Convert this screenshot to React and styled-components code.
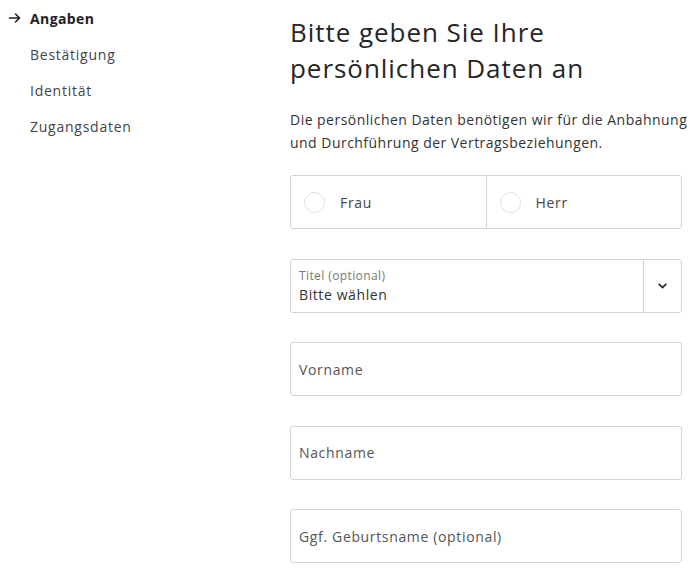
import React from "react";
import styled, { createGlobalStyle } from "styled-components";

const Global = createGlobalStyle`
  html, body { margin: 0; padding: 0; background: #fff; }
  body { font-family: "Open Sans", Lato, sans-serif; color: #2b2b2b; }
  * { box-sizing: border-box; }
`;

const Page = styled.div`
  display: grid;
  grid-template-columns: 290px 410px;
  width: 700px;
  height: 568px;
  overflow: hidden;
`;

const Side = styled.nav`
  display: flex;
  flex-direction: column;
`;

const NavItem = styled.div`
  display: flex;
  align-items: center;
  height: 36px;
  font-size: 14px;
  letter-spacing: ${(p) => (p.$active ? "0.4px" : "0.75px")};
  color: ${(p) => (p.$active ? "#222" : "#444")};
  font-weight: ${(p) => (p.$active ? 700 : 400)};
  padding-left: ${(p) => (p.$active ? "8px" : "30px")};
  gap: 9px;
`;

const Main = styled.main`
  display: flex;
  flex-direction: column;
`;

const Title = styled.h1`
  margin: 14px 0 0;
  font-size: 26px;
  line-height: 36px;
  font-weight: 400;
  letter-spacing: 0.95px;
  color: #262626;
`;

const Lead = styled.p`
  margin: 22px 0 0;
  font-size: 14px;
  line-height: 23px;
  letter-spacing: 0.47px;
  color: #333;
  white-space: nowrap;
`;

const Fields = styled.div`
  display: flex;
  flex-direction: column;
  gap: 29.5px;
  margin-top: 21px;
  width: 392px;
`;

const Box = styled.div`
  display: flex;
  height: 54px;
  border: 1px solid #d4d4d4;
  border-radius: 3px;
  background: #fff;
`;

const RadioCell = styled.label`
  flex: 1;
  display: flex;
  align-items: center;
  padding-left: 13px;
  gap: 15px;
  font-size: 14px;
  letter-spacing: 0.7px;
  color: #444;
  & + & { border-left: 1px solid #d4d4d4; }
`;

const Circle = styled.span`
  width: 21px;
  height: 21px;
  border-radius: 50%;
  border: 1.5px solid #dde2df;
`;

const SelectBody = styled.div`
  flex: 1;
  display: flex;
  flex-direction: column;
  justify-content: center;
  padding-left: 8px;
  gap: 2px;
`;

const Small = styled.span`
  font-size: 12px;
  line-height: 16px;
  color: #777;
  letter-spacing: 0.4px;
`;

const Value = styled.span`
  font-size: 14px;
  line-height: 18px;
  color: #333;
  letter-spacing: 0.6px;
`;

const Chevron = styled.div`
  width: 38px;
  display: flex;
  align-items: center;
  justify-content: center;
  border-left: 1px solid #d4d4d4;
  color: #333;
`;

const Input = styled(Box)`
  align-items: center;
  padding-left: 8px;
  font-size: 14px;
  letter-spacing: 0.65px;
  color: #555;
`;

export default function App() {
  return (
    <>
      <Global />
      <Page>
        <Side>
          <NavItem $active>
            <svg width="13" height="12" viewBox="0 0 13 12" fill="none" stroke="#222" strokeWidth="1.6" strokeLinecap="round" strokeLinejoin="round">
              <path d="M1.5 6h10M7.5 2l4 4-4 4" />
            </svg>
            Angaben
          </NavItem>
          <NavItem>Bestätigung</NavItem>
          <NavItem>Identität</NavItem>
          <NavItem>Zugangsdaten</NavItem>
        </Side>
        <Main>
          <Title>
            Bitte geben Sie Ihre
            <br />
            persönlichen Daten an
          </Title>
          <Lead>
            Die persönlichen Daten benötigen wir für die Anbahnung
            <br />
            und Durchführung der Vertragsbeziehungen.
          </Lead>
          <Fields>
            <Box>
              <RadioCell>
                <Circle />
                Frau
              </RadioCell>
              <RadioCell>
                <Circle />
                Herr
              </RadioCell>
            </Box>
            <Box>
              <SelectBody>
                <Small>Titel (optional)</Small>
                <Value>Bitte wählen</Value>
              </SelectBody>
              <Chevron>
                <svg width="9" height="6" viewBox="0 0 9 6" fill="none" stroke="#333" strokeWidth="1.8" strokeLinecap="round" strokeLinejoin="round">
                  <path d="M1.2 1.3l3.3 3.2 3.3-3.2" />
                </svg>
              </Chevron>
            </Box>
            <Input>Vorname</Input>
            <Input>Nachname</Input>
            <Input>Ggf. Geburtsname (optional)</Input>
          </Fields>
        </Main>
      </Page>
    </>
  );
}
